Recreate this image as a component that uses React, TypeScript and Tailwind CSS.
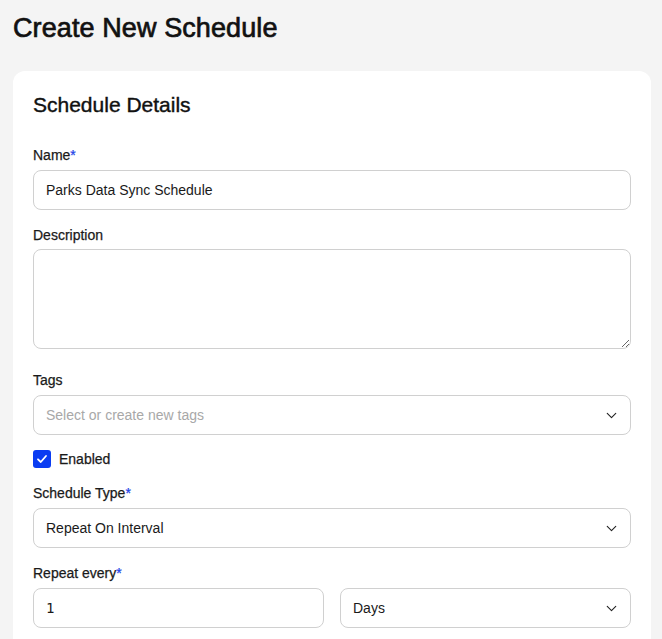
import React from "react";
import { ChevronDown } from "lucide-react";

const FONT = { fontFamily: "'Liberation Sans', Arial, sans-serif" };

function Label({ text, required }: { text: string; required?: boolean }) {
  return (
    <div className="mb-[5px] text-[14px] leading-5 text-[#1a1a1a] [-webkit-text-stroke:0.25px_#1a1a1a]">
      {text}
      {required && <span className="text-[#1f45e8] [-webkit-text-stroke:0.25px_#1f45e8]">*</span>}
    </div>
  );
}

function SelectBox({ value, placeholder }: { value?: string; placeholder?: string }) {
  return (
    <div className="flex h-10 w-full items-center justify-between rounded-lg border border-[#d0d0d0] bg-white pl-3 pr-[10px]">
      <span className={value ? "text-[14px] text-[#1a1a1a]" : "text-[14px] text-[#a8a8a8]"}>
        {value ?? placeholder}
      </span>
      <ChevronDown size={17} strokeWidth={1.6} className="text-[#222]" />
    </div>
  );
}

export default function App() {
  return (
    <div className="min-h-[639px] bg-[#f4f4f4] pl-[13px] pr-[11px] pt-3" style={FONT}>
      <h1 className="mb-[27px] text-[27px] leading-8 tracking-[0.1px] text-[#111] [-webkit-text-stroke:0.7px_#111]">
        Create New Schedule
      </h1>
      <div className="rounded-xl bg-white px-5 pt-5 pb-10">
        <h2 className="mb-[26px] text-[21px] leading-7 text-[#111] [-webkit-text-stroke:0.4px_#111]">Schedule Details</h2>

        <div className="flex flex-col gap-[15px]">
          <div>
            <Label text="Name" required />
            <input
              readOnly
              value="Parks Data Sync Schedule"
              className="block h-10 w-full rounded-lg border border-[#d0d0d0] px-3 text-[14px] text-[#1a1a1a] outline-none"
            />
          </div>

          <div>
            <Label text="Description" />
            <textarea
              readOnly
              className="-mt-px block h-[100px] w-full rounded-lg border border-[#d0d0d0] px-3 py-2 text-[14px] outline-none"
            />
          </div>

          <div className="pt-[6px]">
            <Label text="Tags" />
            <SelectBox placeholder="Select or create new tags" />
          </div>

          <div className="flex h-[18px] items-center gap-2">
            <div className="flex h-[18px] w-[18px] items-center justify-center rounded-[3px] bg-[#0a3cf2]">
              <svg width="12" height="12" viewBox="0 0 12 12" fill="none">
                <path d="M2 6.3 L4.8 9 L10 3" stroke="white" strokeWidth="1.8" strokeLinecap="round" strokeLinejoin="round" />
              </svg>
            </div>
            <span className="text-[14px] text-[#1a1a1a] [-webkit-text-stroke:0.25px_#1a1a1a]">Enabled</span>
          </div>

          <div>
            <Label text="Schedule Type" required />
            <SelectBox value="Repeat On Interval" />
          </div>

          <div>
            <Label text="Repeat every" required />
            <div className="grid grid-cols-2 gap-4">
              <div className="flex h-10 items-center rounded-lg border border-[#d0d0d0] px-3">
                <span className="text-[14px] text-[#1a1a1a]" style={{ fontFamily: "'DejaVu Sans Mono', monospace" }}>
                  1
                </span>
              </div>
              <SelectBox value="Days" />
            </div>
          </div>
        </div>
      </div>
    </div>
  );
}
